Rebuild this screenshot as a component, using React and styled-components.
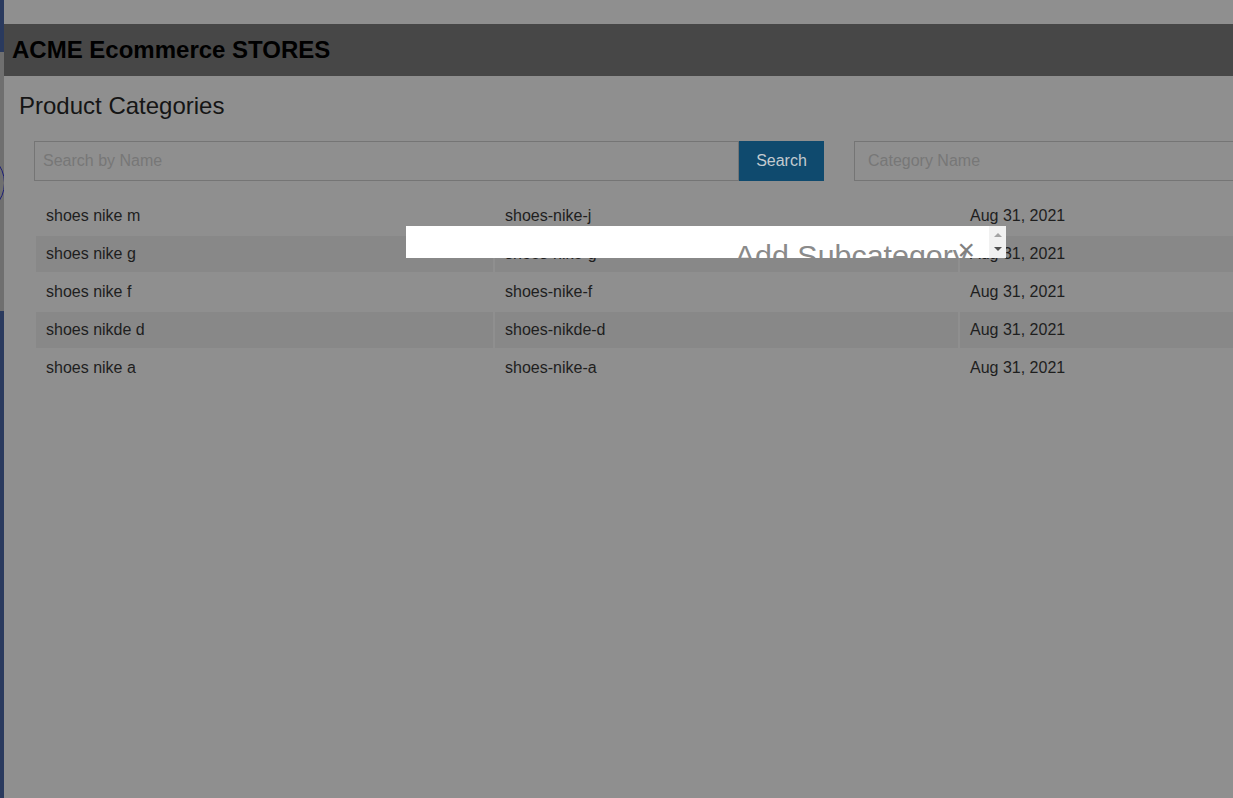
import React from "react";
import styled, { createGlobalStyle } from "styled-components";

const GlobalStyle = createGlobalStyle`
  html, body {
    margin: 0;
    padding: 0;
    overflow: hidden;
  }
  body {
    font-family: "Liberation Sans", Arial, sans-serif;
    background: #8f8f8f;
  }
`;

const Page = styled.div`
  position: relative;
  display: flex;
  width: 1233px;
  height: 798px;
  overflow: hidden;
`;

const Sidebar = styled.aside`
  flex: 0 0 4px;
  background: #2a3a5e;
  overflow: hidden;
  padding-top: 52px;
`;

const SidePanel = styled.div`
  box-sizing: border-box;
  height: 259px;
  padding-top: 98px;
  background: #6f6f6f;
`;

const Avatar = styled.div`
  width: 64px;
  height: 64px;
  margin-left: -61px;
  border: 1px solid #1d1f78;
  border-radius: 50%;
`;

const Main = styled.main`
  flex: 1;
  min-width: 0;
  display: flex;
  flex-direction: column;
`;

const TopStrip = styled.div`
  height: 24px;
`;

const Header = styled.header`
  height: 52px;
  display: flex;
  align-items: center;
  padding-left: 8px;
  background: #474747;
`;

const Brand = styled.h1`
  margin: 0;
  font-size: 24px;
  font-weight: 700;
  color: #000;
  white-space: nowrap;
`;

const Content = styled.section`
  padding: 16px 0 0 15px;
`;

const Title = styled.h2`
  margin: 0;
  font-size: 24px;
  font-weight: 400;
  line-height: 28px;
  color: #151515;
`;

const SearchRow = styled.div`
  display: flex;
  margin: 21px 0 0 15px;
`;

const Input = styled.input`
  flex: 0 0 ${p => p.$width}px;
  box-sizing: border-box;
  height: 40px;
  margin-left: ${p => p.$offset || 0}px;
  padding: 0 ${p => p.$pad || 8}px;
  border: 1px solid #757575;
  background: transparent;
  font-family: inherit;
  font-size: 16px;
  color: #1e1e1e;
  outline: none;
  &::placeholder {
    color: #777;
  }
`;

const SearchButton = styled.button`
  flex: 0 0 85px;
  height: 40px;
  border: none;
  background: #0f4a6e;
  color: #c3cad0;
  font-family: inherit;
  font-size: 16px;
`;

const Table = styled.table`
  margin: 15px 0 0 15px;
  width: 1400px;
  table-layout: fixed;
  border-spacing: 2px;
  font-size: 16px;
  color: #1e1e1e;

  tbody tr:nth-child(even) td {
    background: #888888;
  }
`;

const Col = styled.col`
  width: ${p => p.$w}px;
`;

const Cell = styled.td`
  height: 36px;
  padding: 0 10px;
  vertical-align: middle;
  white-space: nowrap;
`;

const Modal = styled.div`
  position: absolute;
  left: 406px;
  top: 226px;
  width: 600px;
  height: 32px;
  display: flex;
  overflow: hidden;
  background: #fff;
`;

const ModalBody = styled.div`
  position: relative;
  flex: 1;
  padding-top: 12px;
`;

const ModalTitle = styled.h2`
  margin: 0;
  padding-right: 21px;
  font-size: 30.4px;
  font-weight: 400;
  line-height: 34px;
  text-align: right;
  color: #8a8a8a;
  white-space: nowrap;
`;

const CloseButton = styled.button`
  position: absolute;
  top: 9px;
  right: 14px;
  padding: 0;
  border: none;
  background: none;
  font-family: inherit;
  font-size: 30px;
  line-height: 30px;
  color: #808080;
`;

const ScrollTrack = styled.div`
  flex: 0 0 17px;
  display: flex;
  flex-direction: column;
  align-items: center;
  gap: 10px;
  padding-top: 7px;
  background: #f1f1f1;
`;

const ScrollArrow = styled.span`
  width: 0;
  height: 0;
  border-left: 4px solid transparent;
  border-right: 4px solid transparent;
  ${p =>
    p.$down
      ? "border-top: 4px solid #505050;"
      : "border-bottom: 4px solid #a3a3a3;"}
`;

const categories = [
  { name: "shoes nike m", slug: "shoes-nike-j", date: "Aug 31, 2021" },
  { name: "shoes nike g", slug: "shoes-nike-g", date: "Aug 31, 2021" },
  { name: "shoes nike f", slug: "shoes-nike-f", date: "Aug 31, 2021" },
  { name: "shoes nikde d", slug: "shoes-nikde-d", date: "Aug 31, 2021" },
  { name: "shoes nike a", slug: "shoes-nike-a", date: "Aug 31, 2021" },
];

const App = () => {
  return (
    <>
      <GlobalStyle />
      <Page>
        <Sidebar>
          <SidePanel>
            <Avatar />
          </SidePanel>
        </Sidebar>
        <Main>
          <TopStrip />
          <Header>
            <Brand>ACME Ecommerce STORES</Brand>
          </Header>
          <Content>
            <Title>Product Categories</Title>
            <SearchRow>
              <Input $width={705} placeholder="Search by Name" />
              <SearchButton>Search</SearchButton>
              <Input $width={440} $offset={30} $pad={13} placeholder="Category Name" />
            </SearchRow>
            <Table>
              <colgroup>
                <Col $w={457} />
                <Col $w={463} />
                <Col $w={472} />
              </colgroup>
              <tbody>
                {categories.map(c => (
                  <tr key={c.name}>
                    <Cell>{c.name}</Cell>
                    <Cell>{c.slug}</Cell>
                    <Cell>{c.date}</Cell>
                  </tr>
                ))}
              </tbody>
            </Table>
          </Content>
        </Main>
        <Modal>
          <ModalBody>
            <ModalTitle>Add Subcategory</ModalTitle>
            <CloseButton>×</CloseButton>
          </ModalBody>
          <ScrollTrack>
            <ScrollArrow />
            <ScrollArrow $down />
          </ScrollTrack>
        </Modal>
      </Page>
    </>
  );
};

export default App;
